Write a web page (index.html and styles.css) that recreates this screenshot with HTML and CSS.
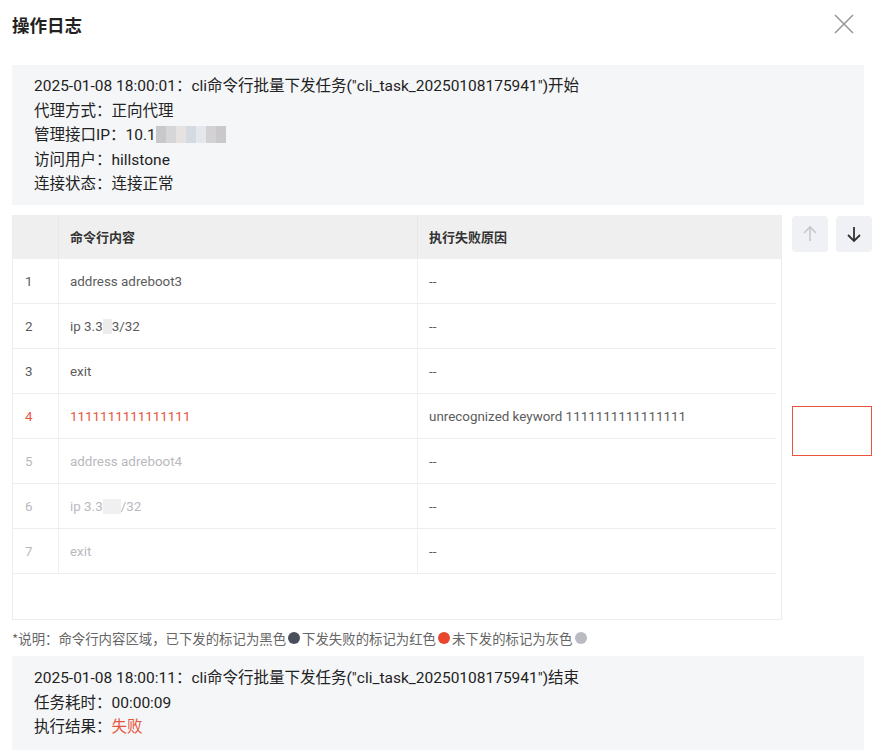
FILE: index.html
```html
<!DOCTYPE html>
<html lang="zh">
<head>
<meta charset="utf-8">
<title>操作日志</title>
<link rel="stylesheet" href="styles.css">
</head>
<body>
<div class="dialog">
  <div class="header">
    <div class="title">操作日志</div>
    <svg class="close" width="20" height="20" viewBox="0 0 20 20"><path d="M1 1 L19 19 M19 1 L1 19" stroke="#999" stroke-width="1.6" fill="none"/></svg>
  </div>
  <div class="content">
    <div class="info">
      <div class="line">2025-01-08 18:00:01：cli命令行批量下发任务("cli_task_20250108175941")开始</div>
      <div class="line">代理方式：正向代理</div>
      <div class="line">管理接口IP：10.1<span class="mask"><i class="m1"></i><i class="m2"></i><i class="m3"></i><i class="m4"></i><i class="m5"></i><i class="m6"></i><i class="m7"></i></span></div>
      <div class="line">访问用户：hillstone</div>
      <div class="line">连接状态：连接正常</div>
    </div>
    <div class="table-area">
      <div class="table-wrap">
        <div class="row head">
          <div class="c1"></div>
          <div class="c2">命令行内容</div>
          <div class="c3">执行失败原因</div>
        </div>
        <div class="row done"><div class="c1">1</div><div class="c2">address adreboot3</div><div class="c3">--</div></div>
        <div class="row done"><div class="c1">2</div><div class="c2">ip 3.3<span class="pmask"></span>3/32</div><div class="c3">--</div></div>
        <div class="row done"><div class="c1">3</div><div class="c2">exit</div><div class="c3">--</div></div>
        <div class="row fail"><div class="c1">4</div><div class="c2">1111111111111111</div><div class="c3">unrecognized keyword 1111111111111111</div></div>
        <div class="row pend"><div class="c1">5</div><div class="c2">address adreboot4</div><div class="c3">--</div></div>
        <div class="row pend"><div class="c1">6</div><div class="c2">ip 3.3<span class="pmask wide"></span>/32</div><div class="c3">--</div></div>
        <div class="row pend"><div class="c1">7</div><div class="c2">exit</div><div class="c3">--</div></div>
      </div>
      <div class="side">
        <div class="btns">
          <div class="btn"><svg width="18" height="18" viewBox="0 0 18 18"><path d="M9 16 V2 M3 8 L9 2 L15 8" stroke="#c5c8ce" stroke-width="1.6" fill="none"/></svg></div>
          <div class="btn"><svg width="18" height="18" viewBox="0 0 18 18"><path d="M9 2 V16 M3 10 L9 16 L15 10" stroke="#333" stroke-width="1.8" fill="none"/></svg></div>
        </div>
        <div class="redbox"></div>
      </div>
    </div>
    <div class="legend">*说明：命令行内容区域，已下发的标记为黑色<span class="dot d1"></span>下发失败的标记为红色<span class="dot d2"></span>未下发的标记为灰色<span class="dot d3"></span></div>
    <div class="info bottom">
      <div class="line">2025-01-08 18:00:11：cli命令行批量下发任务("cli_task_20250108175941")结束</div>
      <div class="line">任务耗时：00:00:09</div>
      <div class="line">执行结果：<span class="red">失败</span></div>
    </div>
  </div>
</div>
</body>
</html>
```
FILE: styles.css
```css
* { box-sizing: border-box; }
html, body { margin: 0; padding: 0; background: #fff; }
body {
  font-family: Roboto, "Noto Sans CJK SC", sans-serif;
  color: #333;
  width: 880px;
}
.header {
  height: 48px;
  display: flex;
  align-items: center;
  justify-content: space-between;
  padding: 0 26px 0 12px;
}
.title {
  font-size: 17.5px;
  font-weight: 700;
  color: #222;
  font-family: "Noto Sans CJK SC", sans-serif;
}
.close { display: block; }
.content { padding: 17px 16px 0 12px; }
.info {
  background: #f5f6f8;
  padding: 9px 22px 8px 22px;
  font-size: 15.5px;
  color: #222;
}
.info .line { line-height: 24.6px; height: 24.6px; white-space: nowrap; }
.mask { display: inline-flex; vertical-align: -3px; height: 17px; }
.mask i { display: block; width: 10px; height: 17px; }
.m1 { background: #c8c8ca; }
.m2 { background: #d6d6d9; }
.m3 { background: #e6e2e1; }
.m4 { background: #d5dae0; }
.m5 { background: #e4e7eb; }
.m6 { background: #d2d1d3; }
.m7 { background: #cbc8ca; }
.table-area { display: flex; margin-top: 10px; width: 860px; }
.table-wrap {
  flex: 0 0 770px;
  width: 770px;
  height: 405px;
  border: 1px solid #ededed;
  border-top: none;
  overflow: hidden;
}
.row {
  display: flex;
  height: 45px;
  align-items: stretch;
  font-size: 13.4px;
  width: 763px;
  border-bottom: 1px solid #eeeeee;
}
.row > div { display: flex; align-items: center; padding-top: 1px; }
.row .c1 { width: 46px; padding-left: 12px; border-right: 1px solid #f0f0f0; }
.row .c2 { width: 359px; padding-left: 11px; border-right: 1px solid #f0f0f0; }
.row .c3 { flex: 1; padding-left: 11px; color: #5c5c5c; }
.row.head {
  width: 770px;
  height: 44px;
  background: #efefef;
  font-weight: 700;
  font-size: 13px;
  color: #333;
  font-family: "Noto Sans CJK SC", sans-serif;
  border-bottom: none;
}
.row.head > div { padding-top: 0; }
.row.head .c1, .row.head .c2 { border-right: 1px solid #e8e8e8; }
.row.head .c3 { color: #333; }
.row.done { color: #5c5c5c; }
.row.fail { color: #e8553e; }
.row.pend { color: #b9b9be; }
.pmask { display: inline-block; width: 9px; height: 15px; background: #ececec; }
.pmask.wide { width: 18px; background: #f0f0f0; }
.side { margin-left: 10px; flex: 0 0 80px; width: 80px; }
.btns { display: flex; justify-content: space-between; padding-top: 1px; }
.btn {
  width: 36px; height: 36px;
  background: #f0f1f5;
  border-radius: 4px;
  display: flex; align-items: center; justify-content: center;
}
.redbox {
  margin-top: 154px;
  width: 80px;
  height: 50px;
  border: 1px solid #e8553e;
}
.legend {
  margin-top: 9px;
  height: 18px;
  font-size: 13.4px;
  color: #666;
  font-family: "Noto Sans CJK SC", sans-serif;
  display: flex;
  align-items: center;
  white-space: nowrap;
}
.dot { display: inline-block; width: 12px; height: 12px; border-radius: 50%; margin: 0 2px; }
.d1 { background: #4a4f5b; }
.d2 { background: #e8472d; }
.d3 { background: #b9bac2; }
.info.bottom { margin-top: 9px; padding-top: 10px; padding-bottom: 10px; }
.red { color: #e8553e; }
```
